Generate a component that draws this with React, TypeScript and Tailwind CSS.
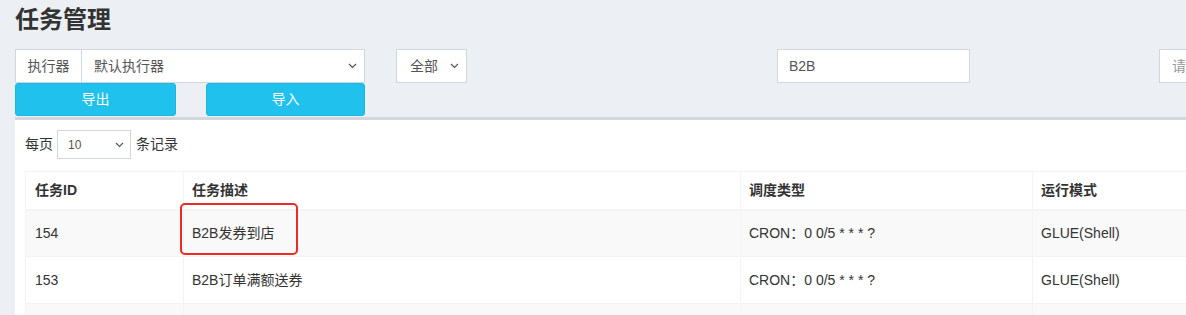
import React from 'react';

const font = { fontFamily: '"Liberation Sans", "Noto Sans CJK SC", sans-serif' };

const Chevron: React.FC<{ className?: string }> = ({ className }) => (
    <svg className={className} width="9" height="6" viewBox="0 0 9 6" fill="none">
        <polyline points="1,1 4.5,4.5 8,1" stroke="#555" strokeWidth="1.2" />
    </svg>
);

const rows = [
    { id: '154', desc: 'B2B发券到店', cron: 'CRON：0 0/5 * * * ?', mode: 'GLUE(Shell)' },
    { id: '153', desc: 'B2B订单满额送券', cron: 'CRON：0 0/5 * * * ?', mode: 'GLUE(Shell)' },
    { id: '', desc: '', cron: '', mode: '' },
];

export default function App() {
    return (
        <div className="w-[1186px] h-[315px] overflow-hidden bg-[#ecf0f5] text-[#333]" style={font}>
            {/* Header */}
            <div className="pl-[15px] pt-[4px] h-[49px]">
                <h1 className="text-[24px] leading-[32px] font-bold text-[#333]">任务管理</h1>
            </div>

            {/* Filters */}
            <div className="grid grid-cols-[381px_381px_382px_381px] pl-[15px] h-[34px] w-[1540px]">
                <div className="flex w-[350px] h-[34px]">
                    <div className="w-[67px] flex items-center justify-center border border-[#d2d6de] bg-white text-[14px] text-[#555]">执行器</div>
                    <div className="flex-1 flex items-center justify-between pl-[12px] pr-[7px] border border-l-0 border-[#d2d6de] bg-white text-[14px] text-[#555]">
                        <span>默认执行器</span>
                        <Chevron />
                    </div>
                </div>
                <div>
                    <div className="w-[71px] h-[34px] flex items-center justify-between pl-[13px] pr-[7px] border border-[#d2d6de] bg-white text-[14px] text-[#555]">
                        <span>全部</span>
                        <Chevron />
                    </div>
                </div>
                <div>
                    <div className="w-[193px] h-[34px] flex items-center pl-[11px] border border-[#d2d6de] bg-white text-[14px] text-[#555]">B2B</div>
                </div>
                <div>
                    <div className="w-[193px] h-[34px] flex items-center pl-[12px] border border-[#d2d6de] bg-white text-[14px] text-[#999] whitespace-nowrap">请输入负责人</div>
                </div>
            </div>

            {/* Buttons */}
            <div className="flex gap-[30px] pl-[15px] h-[34px]">
                <button className="w-[161px] h-[33px] rounded-[3px] bg-[#20c1ed] border border-[#1cb6e0] text-white text-[14px]">导出</button>
                <button className="w-[159px] h-[33px] rounded-[3px] bg-[#20c1ed] border border-[#1cb6e0] text-white text-[14px]">导入</button>
            </div>

            {/* Box */}
            <div className="ml-[15px] border-t-[3px] border-[#d2d6de] bg-white h-[200px] pl-[10px] pt-[10px]">
                <div className="flex items-center h-[29px] text-[14px] text-[#333]">
                    <span>每页</span>
                    <div className="ml-[4px] w-[74px] h-[29px] flex items-center justify-between pl-[10px] pr-[6px] border border-[#d2d6de] text-[12px] text-[#555]">
                        <span>10</span>
                        <Chevron />
                    </div>
                    <span className="ml-[5px]">条记录</span>
                </div>

                <div className="relative mt-[12px]">
                    <table className="border-collapse text-[14px] text-[#333] w-[1200px]">
                        <thead>
                            <tr className="h-[38px]">
                                <th className="w-[158px] border border-[#f4f4f4] border-b-2 text-left font-bold pl-[9px]">任务ID</th>
                                <th className="w-[557px] border border-[#f4f4f4] border-b-2 text-left font-bold pl-[8px]">任务描述</th>
                                <th className="w-[292px] border border-[#f4f4f4] border-b-2 text-left font-bold pl-[8px]">调度类型</th>
                                <th className="border border-[#f4f4f4] border-b-2 text-left font-bold pl-[8px]">运行模式</th>
                            </tr>
                        </thead>
                        <tbody>
                            {rows.map((r, i) => (
                                <tr key={i} className={i % 2 === 0 ? 'h-[47px] bg-[#f9f9f9]' : 'h-[47px] bg-white'}>
                                    <td className="border border-[#f4f4f4] pl-[9px] align-middle">{r.id}</td>
                                    <td className="border border-[#f4f4f4] pl-[8px] align-middle">{r.desc}</td>
                                    <td className="border border-[#f4f4f4] pl-[8px] align-middle">{r.cron}</td>
                                    <td className="border border-[#f4f4f4] pl-[8px] align-middle">{r.mode}</td>
                                </tr>
                            ))}
                        </tbody>
                    </table>
                    {/* annotation highlight */}
                    <div className="absolute left-[155px] top-[32px] w-[118px] h-[52px] border-2 border-[#ee2a24] rounded-[5px] pointer-events-none" />
                </div>
            </div>
        </div>
    );
}
